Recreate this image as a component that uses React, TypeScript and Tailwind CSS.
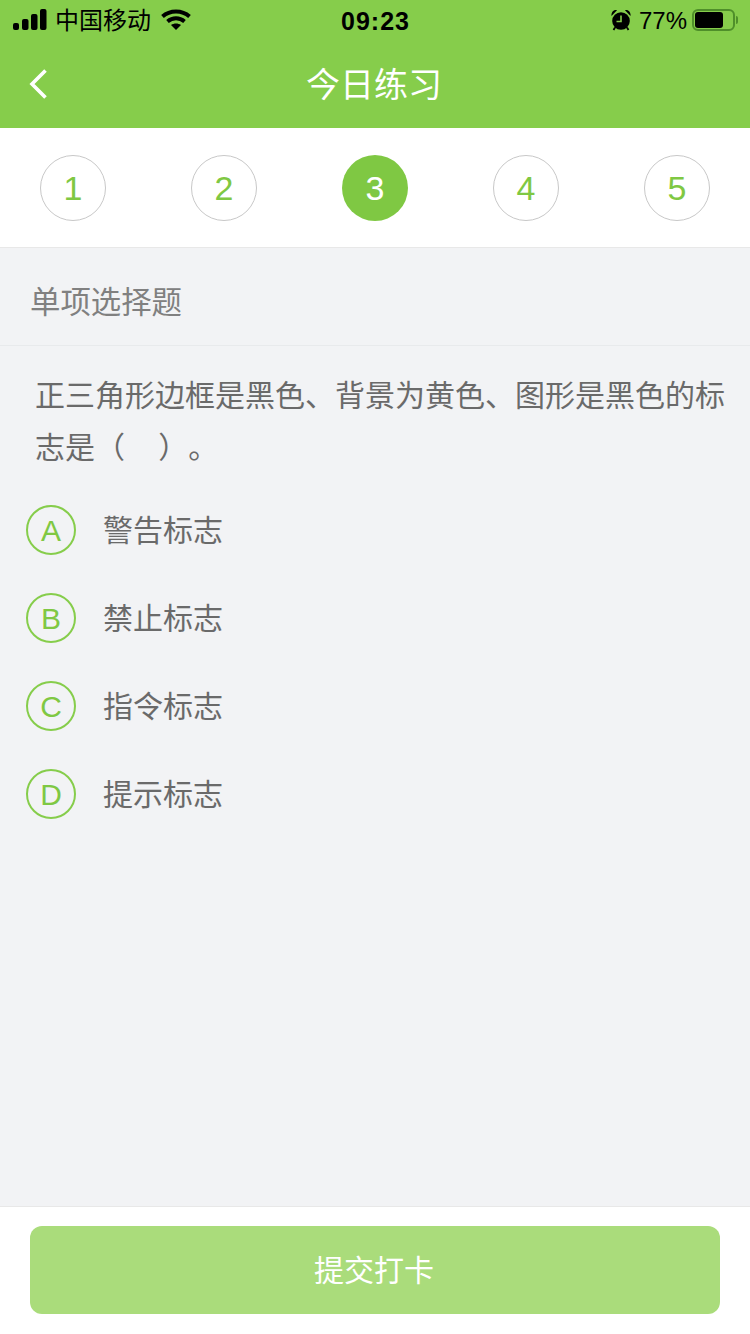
import React from 'react';

const FONT = { fontFamily: '"Liberation Sans", "Noto Sans CJK SC", sans-serif' };

const STEPS = [1, 2, 3, 4, 5];
const ACTIVE_STEP = 3;

const OPTIONS = [
  { key: 'A', label: '警告标志' },
  { key: 'B', label: '禁止标志' },
  { key: 'C', label: '指令标志' },
  { key: 'D', label: '提示标志' },
];

const SignalIcon = () => (
  <svg width="34" height="22" viewBox="0 0 34 22" fill="#000">
    <rect x="0" y="14" width="6" height="7" rx="2" />
    <rect x="9" y="10" width="6.5" height="11" rx="2" />
    <rect x="18" y="5" width="6.5" height="16" rx="2" />
    <rect x="27" y="0" width="6.5" height="21" rx="2" />
  </svg>
);

const WifiIcon = () => (
  <svg width="30" height="22" viewBox="0 0 30 22" fill="none" stroke="#000" strokeWidth="4">
    <path d="M1.5 7.5C9 0.8 21 0.8 28.5 7.5" />
    <path d="M6.5 12.5C11.5 8.3 18.5 8.3 23.5 12.5" />
    <path d="M15 21L10 16C13 14 17 14 20 16Z" fill="#000" stroke="none" />
  </svg>
);

const AlarmIcon = () => (
  <svg width="20" height="22" viewBox="0 0 20 22">
    <path d="M0.5 7C0 3.5 2.5 0.5 6 1.2Z" fill="#000" />
    <path d="M19.5 7C20 3.5 17.5 0.5 14 1.2Z" fill="#000" />
    <circle cx="10" cy="12" r="8.8" fill="#000" />
    <path d="M10 6.5V12.5H5.5" fill="none" stroke="#86cd4b" strokeWidth="1.6" />
    <path d="M4 18.5L2.5 21M16 18.5L17.5 21" stroke="#000" strokeWidth="1.8" />
  </svg>
);

const BatteryIcon = () => (
  <div className="flex items-center">
    <div className="w-[43px] h-[22px] rounded-[6px] border-2 border-[#4f8f2a] p-[1px]">
      <div className="w-[28px] h-full rounded-[3px] bg-black" />
    </div>
    <div className="w-[2px] h-[8px] ml-[1px] rounded-r-sm bg-[#4f8f2a]" />
  </div>
);

const BackIcon = () => (
  <svg width="20" height="32" viewBox="0 0 20 32" fill="none" stroke="#fff" strokeWidth="3.6">
    <path d="M16.5 2.5L3 16L16.5 29.5" />
  </svg>
);

export default function App() {
  return (
    <div className="w-[750px] h-[1334px] flex flex-col bg-[#f2f3f5] overflow-hidden" style={FONT}>
      <header className="h-[128px] shrink-0 bg-[#86cd4b] flex flex-col">
        <div className="h-[40px] pl-[13px] pr-[12px] flex items-center justify-between text-black">
          <div className="flex items-center w-[200px]">
            <SignalIcon />
            <span className="ml-[8px] mt-[2px] text-[24px] leading-none">中国移动</span>
            <span className="ml-[10px] flex"><WifiIcon /></span>
          </div>
          <span className="mt-[2px] text-[25px] font-bold tracking-[1px] leading-none">09:23</span>
          <div className="flex items-center justify-end w-[200px]">
            <AlarmIcon />
            <span className="ml-[8px] mr-[5px] mt-[1px] text-[24px] leading-none">77%</span>
            <BatteryIcon />
          </div>
        </div>
        <div className="flex-1 relative flex items-center justify-center pt-[2px] pr-[2px]">
          <span className="absolute left-[29px] top-[28px] flex"><BackIcon /></span>
          <span className="text-[34px] text-white leading-none">今日练习</span>
        </div>
      </header>

      <nav className="h-[120px] shrink-0 bg-white border-b border-[#e8e8e8] px-[40px] pt-[1px] flex items-center justify-between">
        {STEPS.map((n) =>
          n === ACTIVE_STEP ? (
            <div key={n} className="w-[66px] h-[66px] rounded-full bg-[#7fc843] text-white text-[34px] flex items-center justify-center">
              {n}
            </div>
          ) : (
            <div key={n} className="w-[66px] h-[66px] rounded-full border border-[#c8c8c8] text-[#7fc843] text-[34px] flex items-center justify-center">
              {n}
            </div>
          )
        )}
      </nav>

      <div className="h-[98px] shrink-0 border-b border-[#e8eaec] pl-[30px] pt-[12px] flex items-center text-[30.4px] text-[#808080]">
        单项选择题
      </div>

      <main className="flex-1 flex flex-col">
        <p className="pt-[24px] pl-[35px] pr-[20px] text-[30px] leading-[52px] text-[#6a6a6a] [text-spacing-trim:space-all]">
          正三角形边框是黑色、背景为黄色、图形是黑色的标志是（&nbsp;&nbsp;&nbsp;&nbsp;）。
        </p>
        <ul className="mt-[31px] pl-[26px] flex flex-col gap-[38px]">
          {OPTIONS.map((o) => (
            <li key={o.key} className="flex items-center h-[50px]">
              <div className="w-[50px] h-[50px] rounded-full border-2 border-[#86cd4b] text-[#7fc843] text-[30px] flex items-center justify-center">
                {o.key}
              </div>
              <span className="ml-[27px] text-[30px] text-[#6a6a6a]">{o.label}</span>
            </li>
          ))}
        </ul>
      </main>

      <footer className="h-[128px] shrink-0 bg-white border-t border-[#e8e8e8] px-[30px] pt-[19px]">
        <button className="w-full h-[88px] rounded-[12px] bg-[#aadc7b] text-white text-[30px] pr-[2px] flex items-center justify-center">
          提交打卡
        </button>
      </footer>
    </div>
  );
}
